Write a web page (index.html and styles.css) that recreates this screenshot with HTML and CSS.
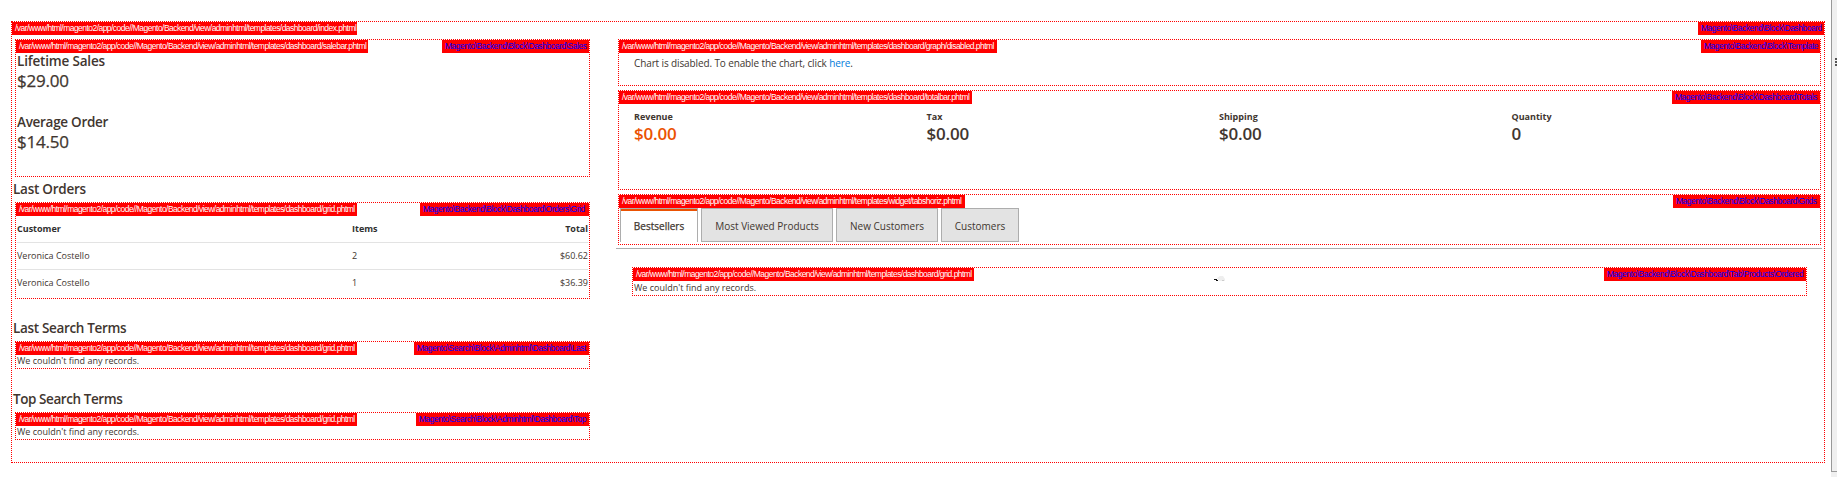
FILE: index.html
```html
<!DOCTYPE html>
<html lang="en">
<head>
<meta charset="utf-8">
<title>Dashboard</title>
<link rel="stylesheet" href="styles.css">
</head>
<body>
<div class="page">
<main class="hint dashboard">
  <span class="path" style="width:345px">/var/www/html/magento2/app/code//Magento/Backend/view/adminhtml/templates/dashboard/index.phtml</span>
  <span class="block" style="width:126px">Magento\Backend\Block\Dashboard</span>
  <div class="side">
    <section class="hint sales">
      <span class="path" style="width:352px">/var/www/html/magento2/app/code//Magento/Backend/view/adminhtml/templates/dashboard/salebar.phtml</span>
      <span class="block" style="width:147px">Magento\Backend\Block\Dashboard\Sales</span>
      <div class="sale"><h2 class="title lifetime">Lifetime Sales</h2><div class="price">$29.00</div></div>
      <div class="sale"><h2 class="title">Average Order</h2><div class="price">$14.50</div></div>
    </section>
    <h2 class="title heading orders-heading">Last Orders</h2>
    <section class="hint orders">
      <span class="path" style="width:341px">/var/www/html/magento2/app/code//Magento/Backend/view/adminhtml/templates/dashboard/grid.phtml</span>
      <span class="block" style="width:169px">Magento\Backend\Block\Dashboard\Orders\Grid</span>
      <div class="row head"><span>Customer</span><span>Items</span><span class="total">Total</span></div>
      <div class="row"><span>Veronica Costello</span><span>2</span><span class="total">$60.62</span></div>
      <div class="row"><span>Veronica Costello</span><span>1</span><span class="total">$36.39</span></div>
    </section>
    <h2 class="title heading last-heading">Last Search Terms</h2>
    <section class="hint empty">
      <span class="path" style="width:341px">/var/www/html/magento2/app/code//Magento/Backend/view/adminhtml/templates/dashboard/grid.phtml</span>
      <span class="block" style="width:175px">Magento\Search\Block\Adminhtml\Dashboard\Last</span>
      <p class="none">We couldn't find any records.</p>
    </section>
    <h2 class="title heading top-heading">Top Search Terms</h2>
    <section class="hint empty">
      <span class="path" style="width:341px">/var/www/html/magento2/app/code//Magento/Backend/view/adminhtml/templates/dashboard/grid.phtml</span>
      <span class="block" style="width:173px">Magento\Search\Block\Adminhtml\Dashboard\Top</span>
      <p class="none">We couldn't find any records.</p>
    </section>
  </div>
  <div class="main">
    <section class="hint chart">
      <span class="path" style="width:378px">/var/www/html/magento2/app/code//Magento/Backend/view/adminhtml/templates/dashboard/graph/disabled.phtml</span>
      <span class="block" style="width:119px">Magento\Backend\Block\Template</span>
      <p class="notice">Chart is disabled. To enable the chart, click <a class="link" href="#">here</a>.</p>
    </section>
    <section class="hint totals">
      <span class="path" style="width:353px">/var/www/html/magento2/app/code//Magento/Backend/view/adminhtml/templates/dashboard/totalbar.phtml</span>
      <span class="block" style="width:148px">Magento\Backend\Block\Dashboard\Totals</span>
      <div class="sum revenue"><span class="label">Revenue</span><div class="price">$0.00</div></div>
      <div class="sum"><span class="label">Tax</span><div class="price">$0.00</div></div>
      <div class="sum"><span class="label">Shipping</span><div class="price">$0.00</div></div>
      <div class="sum"><span class="label">Quantity</span><div class="price">0</div></div>
    </section>
    <section class="hint tabs">
      <span class="path" style="width:346px">/var/www/html/magento2/app/code//Magento/Backend/view/adminhtml/templates/widget/tabshoriz.phtml</span>
      <span class="block" style="width:147px">Magento\Backend\Block\Dashboard\Grids</span>
      <div class="tab active" style="width:78px">Bestsellers</div>
      <div class="tab" style="width:132px">Most Viewed Products</div>
      <div class="tab" style="width:102px">New Customers</div>
      <div class="tab" style="width:78px">Customers</div>
    </section>
    <div class="panel">
      <section class="hint products">
        <span class="path" style="width:341px">/var/www/html/magento2/app/code//Magento/Backend/view/adminhtml/templates/dashboard/grid.phtml</span>
        <span class="block" style="width:202px">Magento\Backend\Block\Dashboard\Tab\Products\Ordered</span>
        <p class="none">We couldn't find any records.</p>
        <svg class="spinner" width="12" height="6" viewBox="0 0 12 6"><path d="M3 2L6 0h3l2 3v2H5z" fill="#eee"/><path d="M0 3h3v1h1v1H2V4H0z" fill="#111"/><path d="M8 4h2v1H8z" fill="#ccc"/></svg>
      </section>
    </div>
  </div>
</main>
<aside class="dock"><div class="dock-panel"><i class="grip"></i><i class="grip"></i><i class="grip"></i></div></aside>
</div>
</body>
</html>
```
FILE: styles.css
```css
* { box-sizing: border-box; }
body { margin: 0; background: #fff; color: #41362f; font-family: "Open Sans", "Noto Sans", sans-serif; overflow: hidden; }
h2, p { margin: 0; }
.page { display: flex; height: 477px; justify-content: space-between; }
.hint { position: relative; border: 1px dotted #f00; }
.path, .block { position: absolute; top: 0; height: 13px; padding: 0 3px; background: #f00; color: #fff; font: 8.5px/12px "Liberation Sans", Arial, sans-serif; letter-spacing: -0.54px; white-space: nowrap; }
.path { left: 0; }
.block { right: 0; color: #00f; letter-spacing: -0.48px; }
.dashboard { display: flex; width: 1814px; height: 442px; margin: 21px 0 0 11px; padding: 17px 2px 0 1px; }
.side { width: 577px; padding-left: 2px; }
.main { width: 1206px; margin-left: 26px; }
.title { font-size: 13.5px; line-height: 20px; height: 20px; font-weight: 600; letter-spacing: -0.28px; }
.lifetime { letter-spacing: -0.18px; }
.price { font-size: 17px; line-height: 20px; font-weight: 600; letter-spacing: -0.2px; }
.sales { height: 138px; padding: 11px 1px 0; }
.sale { height: 61px; }
.sale .price { font-weight: 500; -webkit-text-stroke: 0.25px; }
.heading { margin-left: -2px; }
.orders-heading { height: 25px; padding-top: 2px; letter-spacing: -0.25px; }
.last-heading { height: 42px; padding-top: 19px; letter-spacing: -0.33px; }
.top-heading { height: 43px; padding-top: 20px; letter-spacing: -0.42px; }
.orders { height: 97px; padding: 13px 1px 0; }
.row { display: grid; grid-template-columns: 335px 1fr 60px; height: 27px; font-size: 9px; line-height: 26px; border-bottom: 1px solid #e3e3e3; }
.row:last-child { border: 0; }
.head { color: #303030; font-weight: 700; }
.total { text-align: right; }
.empty { height: 28px; padding: 12px 1px 0; }
.none { font-size: 9px; line-height: 13px; }
.main > .hint { margin: 0 1px 4px 2px; }
.chart { height: 47px; padding: 15px 15px 0; }
.notice { font-size: 10px; line-height: 17px; letter-spacing: -0.12px; }
.link { color: #007bdb; text-decoration: none; }
.totals { display: grid; grid-template-columns: repeat(4, 292.5px); height: 100px; padding: 19px 15px 0; }
.label { display: block; font-size: 9px; line-height: 14px; font-weight: 700; }
.revenue .price { color: #eb5202; }
.main > .tabs { display: flex; gap: 3px; height: 51px; margin-bottom: 3px; padding: 13px 1px 0; }
.tab { height: 34px; border: 1px solid #adadad; background: #e3e3e3; font-size: 10px; line-height: 35px; text-align: center; }
.active { border-bottom: 0; background: #fff; box-shadow: inset 0 2px #eb5202; -webkit-text-stroke: 0.25px; }
.panel { border-top: 1px solid #adadad; padding: 18px 15px 0 16px; }
.products { height: 29px; padding: 13px 1px 0; }
.spinner { position: absolute; left: 581px; top: 8px; }
.dock { width: 6px; height: 477px; background: #f0f0f0; }
.dock-panel { display: flex; flex-direction: column; gap: 1px; height: 472px; padding: 58px 0 0 3px; border: solid #999; border-width: 0 0 1px 1px; }
.grip { height: 2px; background: #555; }
```
